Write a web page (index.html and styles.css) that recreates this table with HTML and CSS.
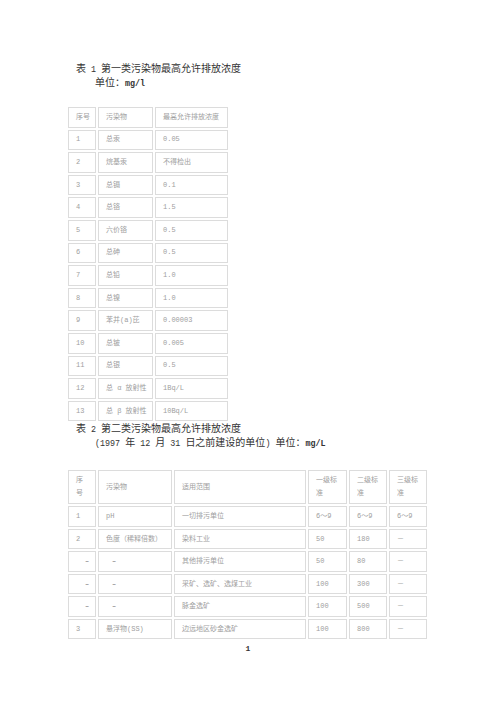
FILE: index.html
```html
<!DOCTYPE html>
<html lang="zh">
<head>
<meta charset="utf-8">
<link rel="stylesheet" href="styles.css">
</head>
<body>
<div class="page">
  <p class="title">表<span class="lat"> 1 </span>第一类污染物最高允许排放浓度</p>
  <p class="unit">单位：<b class="lat">mg/l</b></p>
  <table class="t1">
    <tr><td class="c1">序号</td><td class="c2">污染物</td><td class="c3">最高允许排放浓度</td></tr>
    <tr><td>1</td><td>总汞</td><td>0.05</td></tr>
    <tr><td>2</td><td>烷基汞</td><td>不得检出</td></tr>
    <tr><td>3</td><td>总镉</td><td>0.1</td></tr>
    <tr><td>4</td><td>总铬</td><td>1.5</td></tr>
    <tr><td>5</td><td>六价铬</td><td>0.5</td></tr>
    <tr><td>6</td><td>总砷</td><td>0.5</td></tr>
    <tr><td>7</td><td>总铅</td><td>1.0</td></tr>
    <tr><td>8</td><td>总镍</td><td>1.0</td></tr>
    <tr><td>9</td><td>苯并(a)芘</td><td>0.00003</td></tr>
    <tr><td>10</td><td>总铍</td><td>0.005</td></tr>
    <tr><td>11</td><td>总银</td><td>0.5</td></tr>
    <tr><td>12</td><td>总 α 放射性</td><td>1Bq/L</td></tr>
    <tr><td>13</td><td>总 β 放射性</td><td>10Bq/L</td></tr>
  </table>
  <p class="title">表<span class="lat"> 2 </span>第二类污染物最高允许排放浓度</p>
  <p class="unit"><span class="lat">(1997 </span>年<span class="lat"> 12 </span>月<span class="lat"> 31 </span>日之前建设的单位<span class="lat">) </span>单位：<b class="lat">mg/L</b></p>
  <table class="t2">
    <tr class="head"><td class="d1">序<br>号</td><td class="d2">污染物</td><td class="d3">适用范围</td><td class="d4">一级标<br>准</td><td class="d5">二级标<br>准</td><td class="d6">三级标<br>准</td></tr>
    <tr><td>1</td><td>pH</td><td>一切排污单位</td><td>6～9</td><td>6～9</td><td>6～9</td></tr>
    <tr><td>2</td><td>色度（稀释倍数）</td><td>染料工业</td><td>50</td><td>180</td><td>－</td></tr>
    <tr><td><span class="ind1">–</span></td><td><span class="ind2">–</span></td><td>其他排污单位</td><td>50</td><td>80</td><td>－</td></tr>
    <tr><td><span class="ind1">–</span></td><td><span class="ind2">–</span></td><td>采矿、选矿、选煤工业</td><td>100</td><td>300</td><td>－</td></tr>
    <tr><td><span class="ind1">–</span></td><td><span class="ind2">–</span></td><td>脉金选矿</td><td>100</td><td>500</td><td>－</td></tr>
    <tr><td>3</td><td>悬浮物(SS)</td><td>边远地区砂金选矿</td><td>100</td><td>800</td><td>－</td></tr>
  </table>
  <p class="pagenum">1</p>
</div>
</body>
</html>
```
FILE: styles.css
```css
html, body {
  margin: 0;
  padding: 0;
  background: #fff;
}
.page {
  padding-top: 63px;
  font-family: "Liberation Mono", "Noto Sans CJK SC", monospace;
  color: #333;
}
.title {
  margin: 0 0 0 76px;
  font-size: 10px;
  line-height: 14px;
  height: 14px;
}
.unit {
  margin: 0 0 0 95px;
  font-size: 10px;
  line-height: 14px;
  height: 14px;
}
.lat {
  font-size: 8.4px;
}
.unit b {
  font-weight: bold;
}
table {
  border-collapse: separate;
  border-spacing: 2px;
  margin-left: 66px;
  table-layout: fixed;
  font-size: 7px;
  color: #9e9e9e;
}
td {
  box-sizing: border-box;
  border: 1px solid #dcdcdc;
  padding: 0 2px 0 7px;
  line-height: 13px;
  vertical-align: middle;
  white-space: nowrap;
}
.t1 {
  margin-top: 14px;
}
.t1 td {
  height: 20.6px;
}
.t1 .c1 { width: 28px; }
.t1 .c2 { width: 55px; }
.t1 .c3 { width: 73px; }
.t2 {
  margin-top: 17px;
}
.t2 td {
  height: 20.5px;
}
.t2 .head td {
  height: 34px;
}
.t2 .d1 { width: 28px; }
.t2 .d2 { width: 74px; }
.t2 .d3 { width: 132px; }
.t2 .d4 { width: 39px; }
.t2 .d5 { width: 38px; }
.t2 .d6 { width: 38px; }
.ind1 {
  padding-left: 9px;
  color: #666;
}
.ind2 {
  padding-left: 6px;
  color: #666;
}
.pagenum {
  margin: 3px 0 0 0;
  width: 496px;
  text-align: center;
  font-size: 8px;
  line-height: 10px;
  font-weight: bold;
  color: #333;
}
```
